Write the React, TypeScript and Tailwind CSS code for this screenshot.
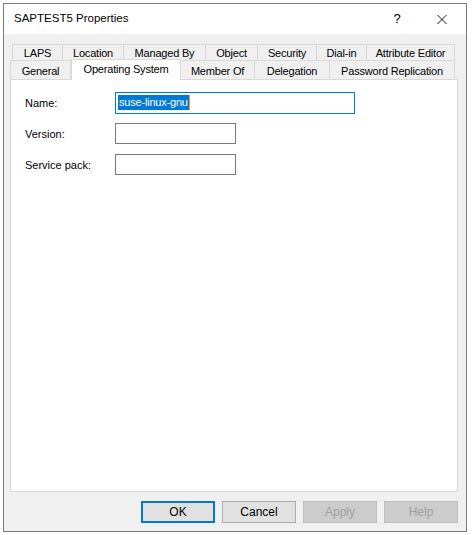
import { FC } from 'react'

const font = { fontFamily: '"Liberation Sans", Arial, sans-serif' }

type Tab = { label: string; width: string }

const topRow: Tab[] = [
    { label: 'LAPS', width: 'w-[51px]' },
    { label: 'Location', width: 'w-[61px]' },
    { label: 'Managed By', width: 'w-[82px]' },
    { label: 'Object', width: 'w-[52px]' },
    { label: 'Security', width: 'w-[59px]' },
    { label: 'Dial-in', width: 'w-[50px]' },
    { label: 'Attribute Editor', width: 'w-[88px]' },
]

const bottomRow: Tab[] = [
    { label: 'General', width: 'w-[61px]' },
    { label: 'Operating System', width: 'w-[110px]' },
    { label: 'Member Of', width: 'w-[74px]' },
    { label: 'Delegation', width: 'w-[75px]' },
    { label: 'Password Replication', width: 'w-[125px]' },
]

const SELECTED = 'Operating System'

const Field: FC<{ label: string; wide?: boolean; value?: string }> = ({ label, wide, value }) => (
    <div className='flex items-center h-[21px]'>
        <div className='w-[90px] text-[11px] text-black pt-px'>{label}</div>
        {value ? (
            <div className={`${wide ? 'w-[240px]' : 'w-[121px]'} h-[22px] border border-[#0078d7] bg-white flex items-center pl-[2px]`}>
                <span className='bg-[#0078d7] text-white text-[11px] leading-[15px] px-px tracking-[-0.2px]'>{value}</span>
                <span className='w-px h-[15px] bg-[#f7931e]' />
            </div>
        ) : (
            <div className={`${wide ? 'w-[240px]' : 'w-[121px]'} h-[21px] border border-[#7a7a7a] bg-white`} />
        )}
    </div>
)

const Button: FC<{ label: string; primary?: boolean; disabled?: boolean }> = ({ label, primary, disabled }) => {
    let cls = 'border border-[#adadad] bg-[#e1e1e1] text-black'
    if (primary) cls = 'border-2 border-[#0078d7] bg-[#e1e1e1] text-black'
    if (disabled) cls = 'border border-[#bfbfbf] bg-[#cccccc] text-[#a0a0a0]'
    return (
        <div className={`w-[74px] h-[22px] flex items-center justify-center text-[12px] ${cls}`}>{label}</div>
    )
}

const App: FC = () => {
    return (
        <div className='w-[474px] h-[535px] bg-white pt-[3px] pl-[3px]' style={font}>
            <div className='w-[464px] h-[529px] border border-[#7a7a7a] bg-[#f0f0f0] flex flex-col'>
                {/* title bar */}
                <div className='h-[30px] bg-white flex items-center pl-[10px] shrink-0'>
                    <div className='text-[11.5px] text-black flex-1'>SAPTEST5 Properties</div>
                    <div className='w-[20px] text-center text-[13px] text-black mr-[30px]'>?</div>
                    <div className='w-[10px] mr-[19px] flex items-center'>
                        <svg width='11' height='11' viewBox='0 0 11 11'>
                            <path d='M0.5 0.5 L10.5 10.5 M10.5 0.5 L0.5 10.5' stroke='#000' strokeWidth='1' fill='none' />
                        </svg>
                    </div>
                </div>

                <div className='flex-1 flex flex-col pt-[10px] pl-[6px] pr-[8px] pb-[8px]'>
                    {/* tabs */}
                    <div className='flex h-[16px] ml-[2px]'>
                        {topRow.map((t, i) => (
                            <div
                                key={t.label}
                                className={`${t.width} border-t border-r border-[#d9d9d9] ${i === 0 ? 'border-l' : ''} flex items-center justify-center text-[11px] tracking-[-0.2px] text-black pt-[1px]`}
                            >
                                {t.label}
                            </div>
                        ))}
                    </div>
                    <div className='flex h-[19px] items-stretch'>
                        {bottomRow.map((t, i) =>
                            t.label === SELECTED ? (
                                <div
                                    key={t.label}
                                    className={`${t.width} relative z-10 -mt-px -mb-px bg-white border-t border-x border-[#d9d9d9] flex items-center justify-center text-[11px] tracking-[-0.2px] text-black pb-[2px]`}
                                >
                                    {t.label}
                                </div>
                            ) : (
                                <div
                                    key={t.label}
                                    className={`${t.width} border-t border-r border-[#d9d9d9] ${i === 0 ? 'border-l' : ''} flex items-center justify-center text-[11px] tracking-[-0.2px] text-black pt-[2px]`}
                                >
                                    {t.label}
                                </div>
                            )
                        )}
                    </div>

                    {/* panel */}
                    <div className='w-[448px] h-[413px] border border-[#d9d9d9] bg-white pt-[12px] pl-[14px] flex flex-col gap-[10px]'>
                        <Field label='Name:' wide value='suse-linux-gnu' />
                        <Field label='Version:' />
                        <Field label='Service pack:' />
                    </div>

                    {/* buttons */}
                    <div className='flex justify-end gap-[7px] mt-[9px] w-[448px]'>
                        <Button label='OK' primary />
                        <Button label='Cancel' />
                        <Button label='Apply' disabled />
                        <Button label='Help' disabled />
                    </div>
                </div>
            </div>
        </div>
    )
}

export default App
